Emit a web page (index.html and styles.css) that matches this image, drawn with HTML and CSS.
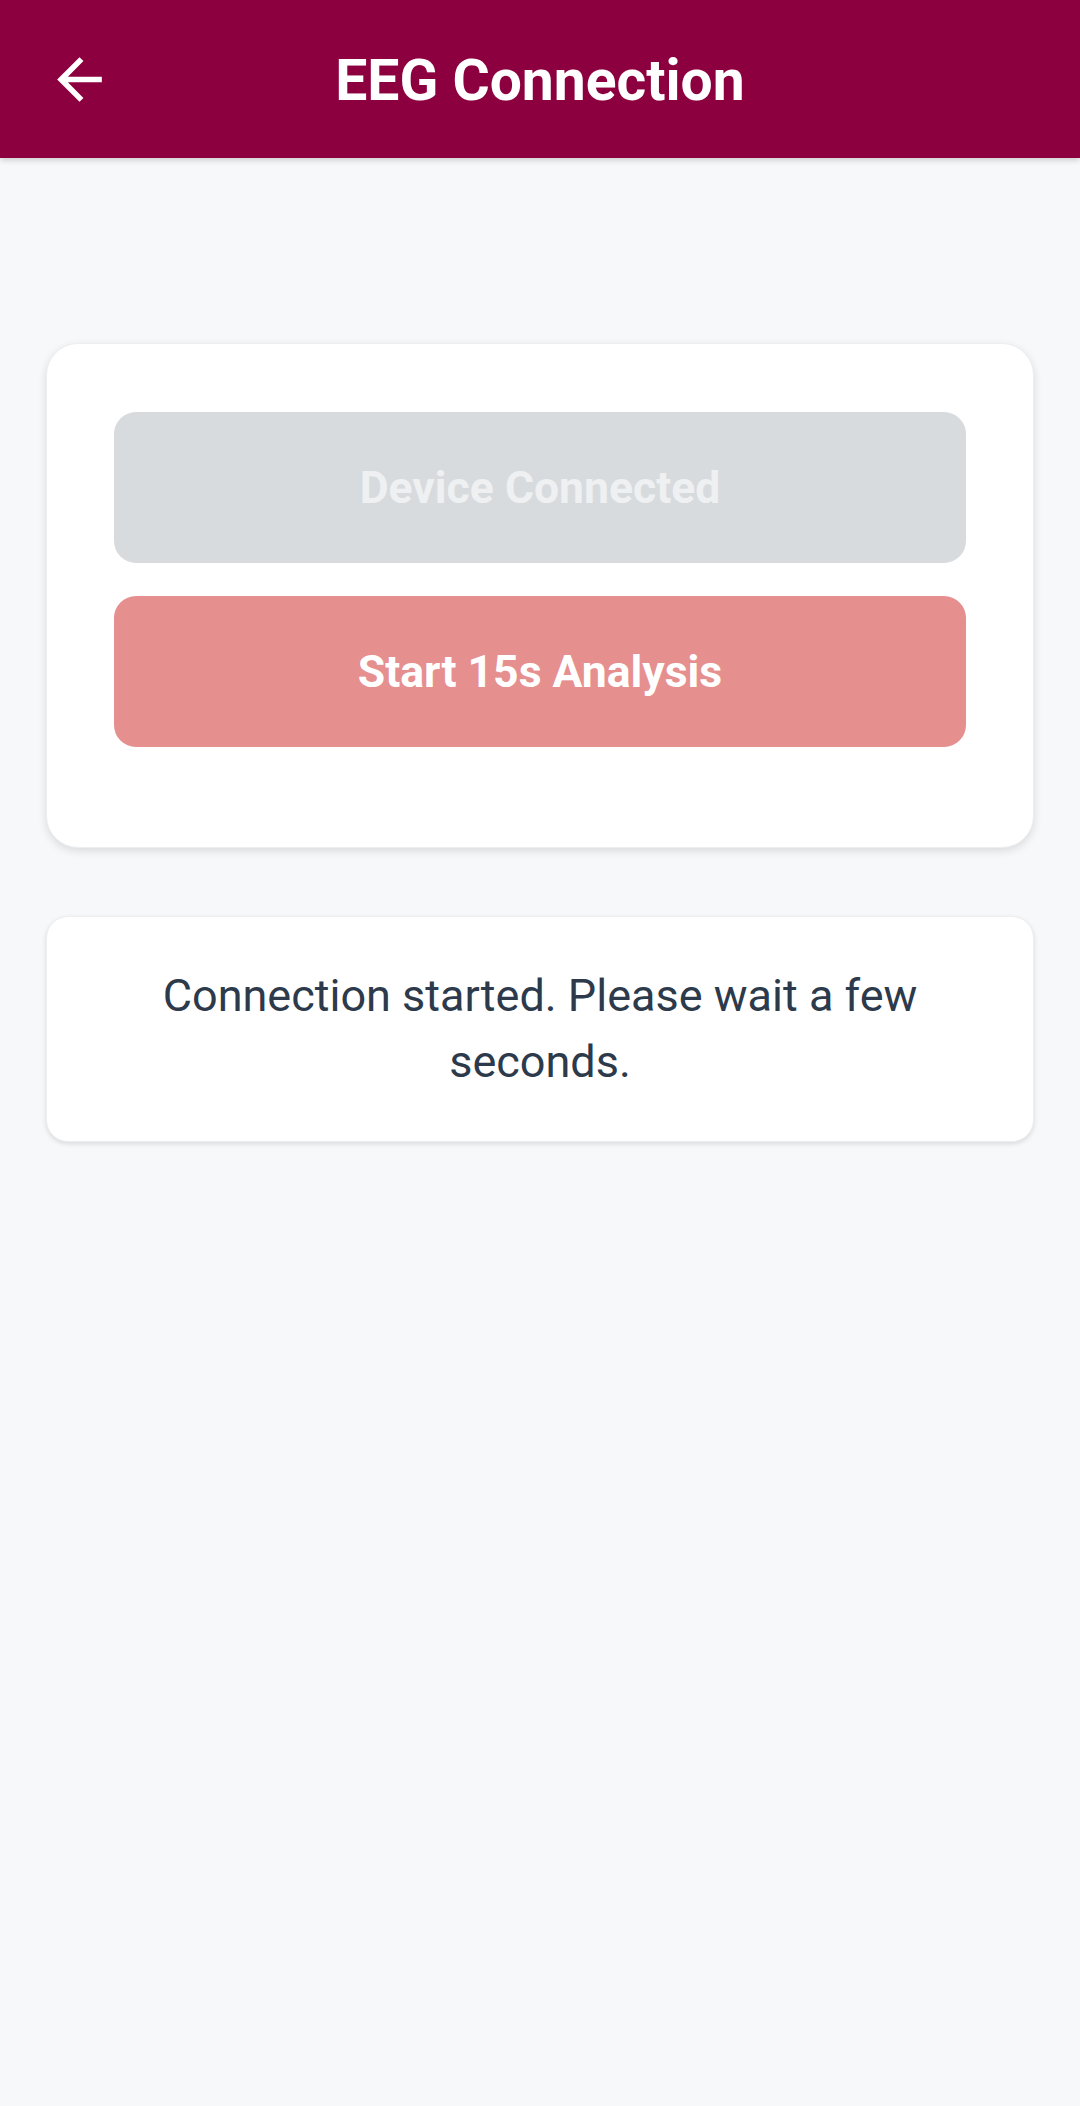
FILE: index.html
```html
<!DOCTYPE html>
<html>
<head>
<meta charset="utf-8">
<link rel="stylesheet" href="styles.css">
</head>
<body>
<header class="appbar">
  <button class="back" aria-label="Back">
    <svg viewBox="0 0 24 24" width="67" height="67"><path fill="#fff" d="M20 11H7.83l5.59-5.59L12 4l-8 8 8 8 1.41-1.41L7.83 13H20v-2z"/></svg>
  </button>
  <h1 class="title">EEG Connection</h1>
</header>
<main class="content">
  <section class="card actions">
    <div class="btn btn-disabled">Device Connected</div>
    <div class="btn btn-start">Start 15s Analysis</div>
  </section>
  <section class="card status">
    <p class="status-text">Connection started. Please wait a few seconds.</p>
  </section>
</main>
</body>
</html>
```
FILE: styles.css
```css
* { box-sizing: border-box; }
html, body { margin: 0; padding: 0; }
body {
  background: #f7f8fa;
  font-family: Roboto, "Noto Sans", sans-serif;
  width: 1080px;
  height: 2106px;
  overflow: hidden;
}
.appbar {
  position: relative;
  height: 158px;
  background: #8c0040;
  display: flex;
  align-items: center;
  justify-content: center;
  box-shadow: 0 2px 6px rgba(0,0,0,0.18);
}
.back {
  position: absolute;
  left: 46px;
  top: 46px;
  width: 67px;
  height: 67px;
  padding: 0;
  border: 0;
  background: none;
}
.back svg { display: block; }
.title {
  margin: 0;
  color: #fff;
  font-size: 57px;
  font-weight: 700;
  line-height: 1;
  transform: translateY(1px);
}
.content {
  padding: 185px 46px 0;
  display: flex;
  flex-direction: column;
  gap: 68px;
}
.card {
  background: #fff;
  border: 1px solid #eceef0;
}
.actions {
  border-radius: 32px;
  padding: 68px 67px 100px;
  display: flex;
  flex-direction: column;
  gap: 33px;
  box-shadow: 0 3px 8px rgba(0,0,0,0.12);
}
.btn {
  height: 151px;
  border-radius: 22px;
  display: flex;
  align-items: center;
  justify-content: center;
  font-size: 44.5px;
  font-weight: 700;
}
.btn-disabled { background: #d8dbde; color: #eef0f2; }
.btn-start { background: #e68f8f; color: #fff; }
.status {
  border-radius: 22px;
  padding: 46px 60px;
  box-shadow: 0 2px 5px rgba(0,0,0,0.12);
}
.status-text {
  margin: 0;
  text-align: center;
  font-size: 45px;
  line-height: 66px;
  color: #2c3a4b;
  padding: 0 50px;
}
```
